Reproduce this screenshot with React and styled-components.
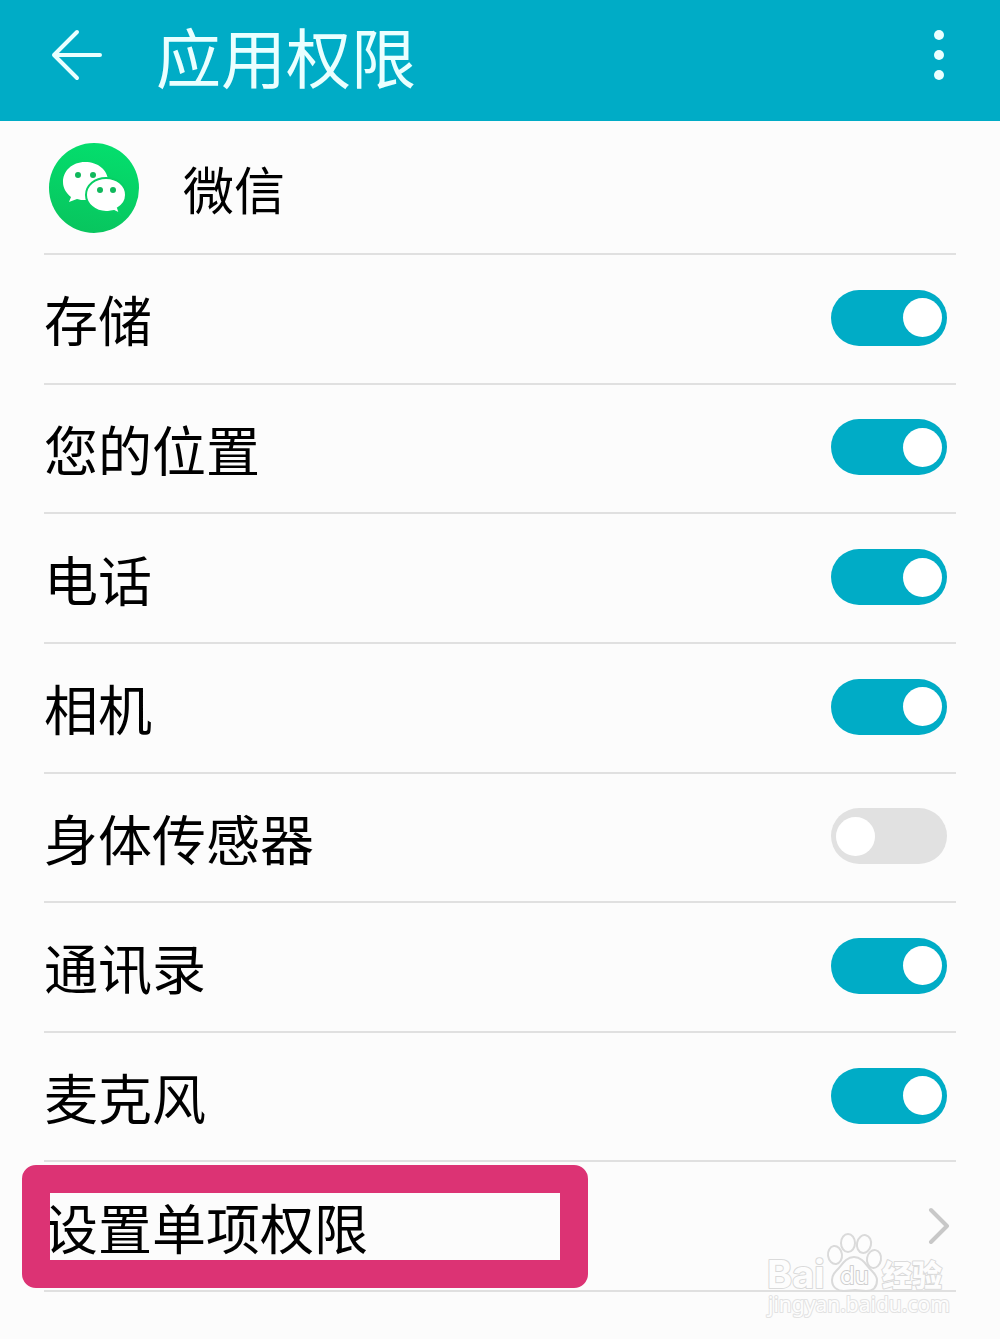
import React, { useState } from "react";
import styled, { createGlobalStyle } from "styled-components";

const GlobalStyle = createGlobalStyle`
  * { box-sizing: border-box; }
  body {
    margin: 0;
    background: #fcfcfc;
    color: #000;
    font-family: "Noto Sans CJK SC", "Noto Sans", sans-serif;
  }
`;

const Page = styled.div`
  position: relative;
  padding-bottom: 47px;
`;

const Header = styled.header`
  display: flex;
  align-items: center;
  height: 121px;
  padding: 0 50px 12px;
  background: #00acc6;
  color: #eaffff;
`;

const IconButton = styled.button`
  display: flex;
  padding: 0;
  border: 0;
  background: none;
  color: inherit;
  cursor: pointer;
`;

const Title = styled.h1`
  flex: 1;
  margin: 0;
  padding-left: 52px;
  font-size: 65px;
  font-weight: 400;
  line-height: 106px;
`;

const Content = styled.main`
  padding: 0 44px;
`;

const AppRow = styled.section`
  display: flex;
  align-items: center;
  gap: 44px;
  height: 134px;
  padding: 2px 0 0 5px;
  border-bottom: 2px solid #e0e0e0;
`;

const AppName = styled.h2`
  margin: 0;
  font-size: 51px;
  font-weight: 400;
  line-height: 72px;
`;

const List = styled.ul`
  display: grid;
  grid-auto-rows: 1fr;
  min-height: 1037px;
  margin: 0;
  padding: 0;
  list-style: none;
`;

const Row = styled.li`
  position: relative;
  display: flex;
  border-bottom: 2px solid #e0e0e0;
  font-size: 54px;
  line-height: 76px;
`;

const RowLabel = styled.label`
  flex: 1;
  display: flex;
  align-items: center;
  justify-content: space-between;
  padding: 0 9px 2px 0;
  cursor: pointer;
`;

const RowLink = styled.a`
  flex: 1;
  display: flex;
  align-items: center;
  justify-content: space-between;
  padding: 0 6px 2px 0;
  color: inherit;
  text-decoration: none;
`;

const RowText = styled.span`
  padding-top: 3px;
`;

const Switch = styled.input`
  appearance: none;
  display: flex;
  align-items: center;
  width: 116px;
  height: 56px;
  margin: 0;
  padding: 0 5px;
  border-radius: 28px;
  background: #e1e1e1;
  cursor: pointer;

  &::before {
    content: "";
    width: 39px;
    height: 39px;
    border-radius: 50%;
    background: #fff;
  }

  &:checked {
    justify-content: flex-end;
    background: #00acc6;
  }
`;

const Highlight = styled.span`
  position: absolute;
  top: 3px;
  left: -22px;
  width: 566px;
  height: 123px;
  border: 28px solid #dc3374;
  border-radius: 14px;
  pointer-events: none;
`;

const Watermark = styled.svg`
  position: absolute;
  right: 50px;
  bottom: 7px;
  pointer-events: none;
`;

const BackIcon = () => (
  <svg width="54" height="54" viewBox="0 0 54 54" fill="none" stroke="currentColor" strokeWidth="4" strokeLinecap="round" strokeLinejoin="round">
    <path d="M50 27H4M27 4L4 27l23 23" />
  </svg>
);

const MoreIcon = () => (
  <svg width="22" height="54" viewBox="0 0 22 54" fill="currentColor">
    <circle cx="11" cy="7" r="5" />
    <circle cx="11" cy="27" r="5" />
    <circle cx="11" cy="47" r="5" />
  </svg>
);

const ChevronIcon = () => (
  <svg width="22" height="38" viewBox="0 0 22 38" fill="none" stroke="#c8c8c8" strokeWidth="4" strokeLinecap="round" strokeLinejoin="round">
    <path d="M3 4l16 16L3 36" />
  </svg>
);

const WeChatIcon = () => (
  <svg width="90" height="90" viewBox="0 0 90 90">
    <defs>
      <linearGradient id="wechat" x1="0.6" y1="0" x2="0.4" y2="1">
        <stop offset="0" stopColor="#04de6d" />
        <stop offset="1" stopColor="#08c55e" />
      </linearGradient>
    </defs>
    <circle cx="45" cy="45" r="45" fill="url(#wechat)" />
    <path fill="#fff" d="M36 19c-13 0-22 9-22 20 0 6 3 11 8 15l-2 5 8-3c3 1 5 1 8 1 13 0 23-8 23-19S49 19 36 19z" />
    <path fill="#fff" stroke="#07cf65" strokeWidth="2" d="M57 35c-11 0-20 7-20 17 0 9 9 17 20 17 3 0 6-1 8-1l6 3-2-6c5-3 8-8 8-13 0-10-9-17-20-17z" />
    <g fill="#10b85c">
      <circle cx="29" cy="32" r="3" />
      <circle cx="44" cy="32" r="3" />
      <circle cx="51" cy="47" r="3" />
      <circle cx="64" cy="47" r="3" />
    </g>
  </svg>
);

const BaiduMark = () => (
  <Watermark width="186" height="100" viewBox="0 0 186 100" fill="#fdfdfd" stroke="#dadada" strokeWidth="2" strokeLinejoin="round">
    <g paintOrder="stroke" fontFamily="Inter, sans-serif">
      <text x="3" y="56" fontSize="38" fontWeight="700">Bai</text>
      <text x="118" y="54" fontSize="30" fontWeight="900" fontFamily="Noto Sans CJK SC, sans-serif">经验</text>
      <text x="4" y="80" fontSize="21" fontFamily="Noto Sans, sans-serif" stroke="#e2e2e2">jingyan.baidu.com</text>
    </g>
    <g transform="translate(-4 -1)">
      <ellipse cx="75" cy="24" rx="7" ry="9" transform="rotate(-8 75 24)" />
      <ellipse cx="88" cy="12" rx="7" ry="9" />
      <ellipse cx="104" cy="13" rx="7" ry="9" transform="rotate(12 104 13)" />
      <ellipse cx="114" cy="28" rx="7" ry="9" transform="rotate(10 114 28)" />
      <path d="M94 26c-7 0-11 6-15 11-4 4-7 7-7 12 0 7 5 11 12 11 4 0 7-1 11-1s7 1 11 1c7 0 11-4 11-11 0-5-4-8-8-12-4-5-8-11-15-11z" />
    </g>
    <text x="76" y="52" fontSize="24" fontFamily="Inter, sans-serif" stroke="#cfcfcf" paintOrder="stroke">du</text>
  </Watermark>
);

const PERMISSIONS = [
  { id: "storage", name: "存储", on: true },
  { id: "location", name: "您的位置", on: true },
  { id: "phone", name: "电话", on: true },
  { id: "camera", name: "相机", on: true },
  { id: "sensors", name: "身体传感器", on: false },
  { id: "contacts", name: "通讯录", on: true },
  { id: "microphone", name: "麦克风", on: true },
];

function PermissionRow({ id, name, on }) {
  const [checked, setChecked] = useState(on);
  return (
    <Row>
      <RowLabel htmlFor={id}>
        <RowText>{name}</RowText>
        <Switch id={id} type="checkbox" checked={checked} onChange={(e) => setChecked(e.target.checked)} />
      </RowLabel>
    </Row>
  );
}

export default function App() {
  return (
    <Page>
      <GlobalStyle />
      <Header>
        <IconButton type="button"><BackIcon /></IconButton>
        <Title>应用权限</Title>
        <IconButton type="button"><MoreIcon /></IconButton>
      </Header>
      <Content>
        <AppRow>
          <WeChatIcon />
          <AppName>微信</AppName>
        </AppRow>
        <List>
          {PERMISSIONS.map((p) => <PermissionRow key={p.id} {...p} />)}
          <Row>
            <RowLink href="#single">
              <RowText>设置单项权限</RowText>
              <ChevronIcon />
            </RowLink>
            <Highlight />
          </Row>
        </List>
      </Content>
      <BaiduMark />
    </Page>
  );
}
